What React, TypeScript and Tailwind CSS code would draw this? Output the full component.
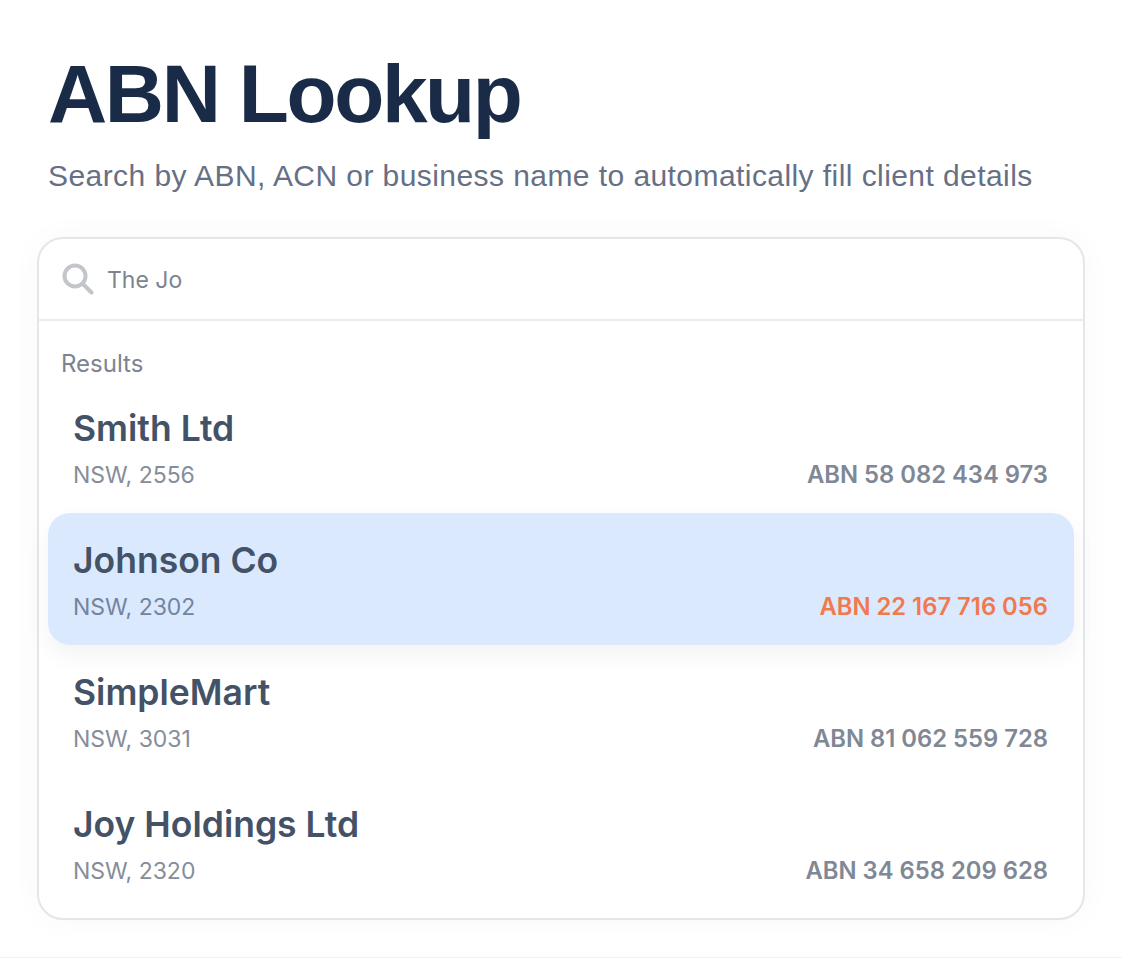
const results = [
  { name: "Smith Ltd", place: "NSW, 2556", abn: "ABN 58 082 434 973" },
  { name: "Johnson Co", place: "NSW, 2302", abn: "ABN 22 167 716 056", active: true },
  { name: "SimpleMart", place: "NSW, 3031", abn: "ABN 81 062 559 728" },
  { name: "Joy Holdings Ltd", place: "NSW, 2320", abn: "ABN 34 658 209 628" },
];

export default function App() {
  return (
    <div className="h-[958px] overflow-hidden bg-white border-b border-[#f1f2f4] font-['Inter',sans-serif]">
      <div className="pl-[48px] pt-[46px]">
        <h1 className="font-['Liberation_Sans',sans-serif] text-[82px] leading-[96px] font-bold tracking-[-2.4px] text-[#1a2b47]">ABN Lookup</h1>
        <p className="mt-[12px] font-['Liberation_Sans',sans-serif] text-[30px] leading-[44px] tracking-[0.43px] text-[#667085]">
          Search by ABN, ACN or business name to automatically fill client details
        </p>
      </div>
      <div className="mx-[37px] mt-[39px] h-[683px] rounded-[26px] border-[2.5px] border-[#e4e6e9] bg-white shadow-[0_0_32px_rgba(16,24,40,0.03)]">
        <div className="flex h-[82px] items-center gap-[13px] border-b-[2.5px] border-[#e9ebee] pl-[23px]">
          <svg viewBox="0 0 32 32" className="h-[32px] w-[32px] text-[#c2c6cb]" fill="none" stroke="currentColor" strokeWidth={4} strokeLinecap="round">
            <circle cx="13" cy="13" r="10.5" />
            <path d="M21 21 L29.5 29.5" />
          </svg>
          <span className="mt-[3px] text-[23px] text-[#7d8490]">The Jo</span>
        </div>
        <div className="px-[9px]">
          <div className="pl-[13px] pt-[26px] text-[24px] leading-[34px] text-[#7d8490]">Results</div>
          <div>
            {results.map((r) => (
              <div
                key={r.name}
                className={
                  r.active
                    ? "flex h-[132px] flex-col rounded-[22px] bg-[#dbe9fe] pl-[25px] pr-[26px] pt-[24px] shadow-[0_10px_24px_rgba(16,24,40,0.05)]"
                    : "flex h-[132px] flex-col pl-[25px] pr-[26px] pt-[24px]"
                }
              >
                <div className="text-[35.5px] leading-[48px] font-semibold text-[#445268]">{r.name}</div>
                <div className="mt-[6px] flex items-center justify-between">
                  <span className={r.active ? "text-[23px] leading-[32px] text-[#74849c]" : "text-[23px] leading-[32px] text-[#868d99]"}>{r.place}</span>
                  <span className={r.active ? "text-[23.8px] leading-[32px] font-semibold text-[#f0794e]" : "text-[23.8px] leading-[32px] font-semibold text-[#808895]"}>{r.abn}</span>
                </div>
              </div>
            ))}
          </div>
        </div>
      </div>
    </div>
  );
}
